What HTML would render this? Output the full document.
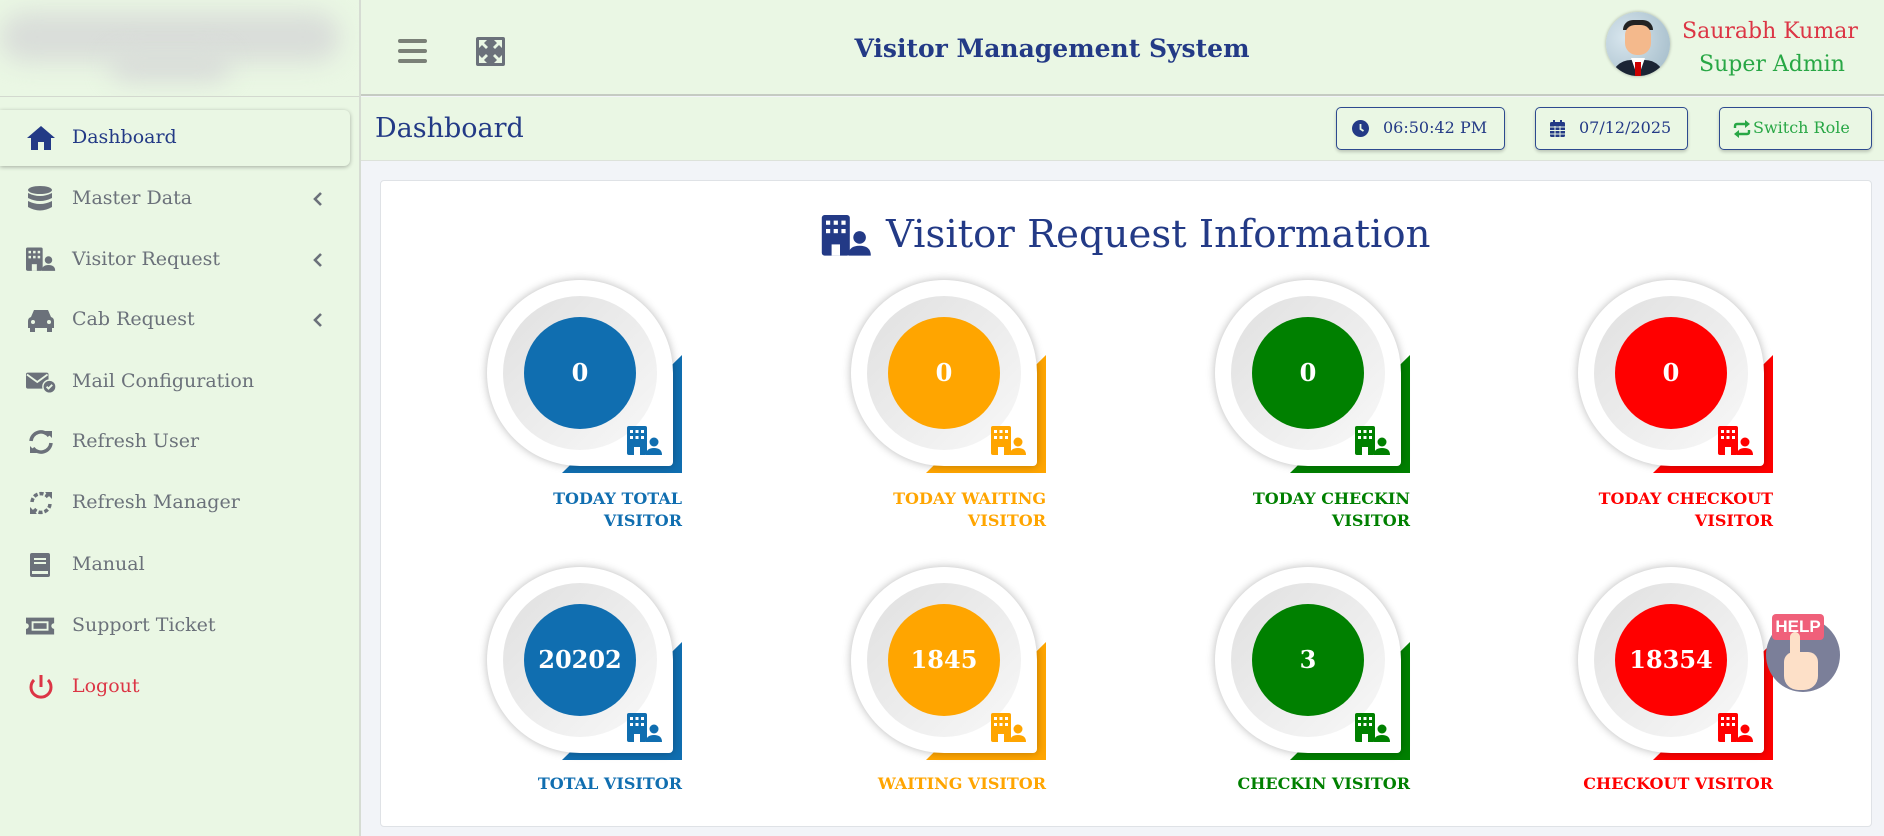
<!DOCTYPE html>
<html><head><meta charset="utf-8"><style>
*{margin:0;padding:0;box-sizing:border-box}
body{width:1884px;height:836px;overflow:hidden;background:#f2f4f8;font-family:"DejaVu Serif",serif;position:relative}
.side{position:absolute;left:0;top:0;width:361px;height:836px;background:#eaf7e4;border-right:2px solid #d6dcd3}
.logo{position:absolute;left:0;top:0;width:359px;height:97px;border-bottom:1px solid #d3d9cf;overflow:hidden}
.blur{position:absolute;border-radius:40px;background:#d9ddd9;filter:blur(12px)}
.item{position:absolute;left:0;width:350px;height:56px;color:#6b717a;font-size:19px}
.item .ic{position:absolute;left:26px;top:15px;width:30px;height:26px}
.item .tx{position:absolute;left:72px;top:16px}
.item .chev{position:absolute;left:313px;top:20px;width:10px;height:16px}
.active{background:#eaf7e4;border-radius:0 6px 6px 0;box-shadow:0 1px 4px rgba(0,0,0,.3);color:#233a86}
.hdr{position:absolute;left:361px;top:0;right:0;height:96px;background:#eaf7e4;border-bottom:2px solid #c5cbc2}
.sub{position:absolute;left:361px;top:97px;right:0;height:64px;background:#eaf7e4;border-bottom:1px solid #dde2da}
.btn{position:absolute;top:107px;height:43px;border:1.5px solid #2d4a8f;border-radius:5px;background:#eaf7e4;box-shadow:0 2px 3px rgba(0,0,0,.2);font-size:16px;color:#233a86;line-height:40px}
.card{position:absolute;left:380px;top:180px;width:1492px;height:647px;background:#fff;border:1px solid #dfe2e6;border-radius:4px}
.cell{position:absolute;width:0;height:0}
.clr{position:absolute;left:-96px;top:-96px;width:200px;height:200px;clip-path:polygon(198px 78px,198px 196px,78px 196px)}
.wh{position:absolute;left:-93px;top:-93px;width:186px;height:186px;background:#fff;border-radius:50% 50% 4px 50%;box-shadow:0 0 9px rgba(0,0,0,.28)}
.ring{position:absolute;left:-77px;top:-77px;width:154px;height:154px;border-radius:50%;background:linear-gradient(135deg,#e0e0e0,#f8f8f8)}
.num{position:absolute;left:-56px;top:-56px;width:112px;height:112px;border-radius:50%;color:#fff;font-weight:bold;font-size:24px;text-align:center;line-height:112px}
.bi{position:absolute;left:47px;top:53px;width:36px;height:30px}
.lab{position:absolute;right:-102px;width:240px;text-align:right;font-weight:bold;font-size:16px;line-height:22px}
</style></head><body>
<div class="side">
 <div class="logo">
  <div class="blur" style="left:0;top:12px;width:340px;height:50px"></div>
  <div class="blur" style="left:110px;top:50px;width:120px;height:32px"></div>
 </div>
 <div class="item active" style="top:110px"><svg class="ic" viewBox="0 0 30 26"><path d="M15 1 L29 13 H25 V25 H18 V17 H12 V25 H5 V13 H1Z" fill="#233a86"/></svg><span class="tx">Dashboard</span></div>
 <div class="item" style="top:171px"><svg class="ic" viewBox="0 0 30 26"><ellipse cx="14" cy="4" rx="12" ry="4" fill="#6b717a"/><path d="M2 7 Q14 13 26 7 V12 Q14 18 2 12Z M2 15 Q14 21 26 15 V21 Q14 28 2 21Z" fill="#6b717a"/></svg><span class="tx">Master Data</span><svg class="chev" viewBox="0 0 10 16"><path d="M8 2 L2 8 L8 14" stroke="#6b717a" stroke-width="2.6" fill="none"/></svg></div>
 <div class="item" style="top:232px"><svg class="ic" viewBox="0 0 36 30"><rect x="0" y="0" width="20" height="28" rx="2" fill="#6b717a"/><g fill="#eaf7e4"><rect x="3" y="4" width="3" height="3"/><rect x="8.5" y="4" width="3" height="3"/><rect x="14" y="4" width="3" height="3"/><rect x="3" y="10" width="3" height="3"/><rect x="8.5" y="10" width="3" height="3"/><rect x="14" y="10" width="3" height="3"/><rect x="7" y="20" width="6" height="8"/></g><circle cx="27" cy="15" r="4.5" fill="#6b717a"/><path d="M19 28 Q19 21 27 21 Q35 21 35 28Z" fill="#6b717a"/></svg><span class="tx">Visitor Request</span><svg class="chev" viewBox="0 0 10 16"><path d="M8 2 L2 8 L8 14" stroke="#6b717a" stroke-width="2.6" fill="none"/></svg></div>
 <div class="item" style="top:292px"><svg class="ic" viewBox="0 0 30 26"><path d="M5 10 L8 3 H22 L25 10 Q28 11 28 14 V21 H2 V14 Q2 11 5 10Z" fill="#6b717a"/><rect x="4" y="20" width="5" height="5" fill="#6b717a"/><rect x="21" y="20" width="5" height="5" fill="#6b717a"/><circle cx="7" cy="15" r="2" fill="#eaf7e4"/><circle cx="23" cy="15" r="2" fill="#eaf7e4"/></svg><span class="tx">Cab Request</span><svg class="chev" viewBox="0 0 10 16"><path d="M8 2 L2 8 L8 14" stroke="#6b717a" stroke-width="2.6" fill="none"/></svg></div>
 <div class="item" style="top:354px"><svg class="ic" viewBox="0 0 32 26"><rect x="0" y="3" width="24" height="17" rx="2" fill="#6b717a"/><path d="M1 5 L12 13 L23 5" stroke="#eaf7e4" stroke-width="2" fill="none"/><circle cx="25" cy="18" r="7" fill="#6b717a" stroke="#eaf7e4" stroke-width="1.5"/><path d="M22 18 l2 2 l4 -4" stroke="#eaf7e4" stroke-width="2" fill="none"/></svg><span class="tx">Mail Configuration</span></div>
 <div class="item" style="top:414px"><svg class="ic" viewBox="0 0 30 26"><path d="M5 12 A10 10 0 0 1 23 7 M25 14 A10 10 0 0 1 7 19" stroke="#6b717a" stroke-width="3.5" fill="none"/><path d="M19 2 L26 2 L26 9Z M11 24 L4 24 L4 17Z" fill="#6b717a"/></svg><span class="tx">Refresh User</span></div>
 <div class="item" style="top:475px"><svg class="ic" viewBox="0 0 30 26"><path d="M6 12 A9 9 0 0 1 22 7 M24 14 A9 9 0 0 1 8 19" stroke="#6b717a" stroke-width="3.5" fill="none" stroke-dasharray="4 2"/><path d="M19 2 L26 2 L26 9Z M11 24 L4 24 L4 17Z" fill="#6b717a"/></svg><span class="tx">Refresh Manager</span></div>
 <div class="item" style="top:537px"><svg class="ic" viewBox="0 0 30 26"><rect x="4" y="1" width="20" height="24" rx="2" fill="#6b717a"/><rect x="8" y="6" width="12" height="2" fill="#eaf7e4"/><rect x="8" y="10" width="12" height="2" fill="#eaf7e4"/><rect x="6" y="19" width="16" height="3" fill="#eaf7e4"/></svg><span class="tx">Manual</span></div>
 <div class="item" style="top:598px"><svg class="ic" viewBox="0 0 32 26"><path d="M0 4 H30 V10 A3 3 0 0 0 30 16 V22 H0 V16 A3 3 0 0 0 0 10Z" fill="#6b717a"/><rect x="6" y="8" width="18" height="10" fill="#eaf7e4"/><rect x="8" y="10" width="14" height="6" fill="#6b717a"/></svg><span class="tx">Support Ticket</span></div>
 <div class="item" style="top:659px;color:#dc3545"><svg class="ic" viewBox="0 0 30 26"><path d="M8 6 A10 10 0 1 0 22 6" stroke="#dc3545" stroke-width="3" fill="none"/><path d="M15 1 V13" stroke="#dc3545" stroke-width="3"/></svg><span class="tx">Logout</span></div>
</div>

<div class="hdr">
 <svg style="position:absolute;left:37px;top:38px" width="29" height="27" viewBox="0 0 29 27"><g stroke="#7a8077" stroke-width="4" stroke-linecap="round"><path d="M2 3H27M2 13H27M2 23H27"/></g></svg>
 <svg style="position:absolute;left:115px;top:37px" width="29" height="29" viewBox="0 0 29 29"><rect width="29" height="29" rx="2" fill="#6b717a"/><g fill="#eaf7e4"><path d="M3 3 h8 l-3 3 l4 4 l-2 2 l-4 -4 l-3 3z"/><path d="M26 3 v8 l-3 -3 l-4 4 l-2 -2 l4 -4 l-3 -3z"/><path d="M3 26 v-8 l3 3 l4 -4 l2 2 l-4 4 l3 3z"/><path d="M26 26 h-8 l3 -3 l-4 -4 l2 -2 l4 4 l3 -3z"/></g></svg>
 <div style="position:absolute;left:0;width:1382px;top:34px;text-align:center;font-size:25px;font-weight:bold;color:#233a86">Visitor Management System</div>
 <div style="position:absolute;left:1245px;top:12px;width:64px;height:64px;border-radius:50%;background:radial-gradient(circle at 30% 40%,#d8e6ee,#9fb8c6);overflow:hidden;box-shadow:0 0 3px rgba(0,0,0,.3)">
  <div style="position:absolute;left:17px;top:8px;width:30px;height:10px;border-radius:12px 12px 0 0;background:#222"></div>
  <div style="position:absolute;left:19px;top:13px;width:26px;height:30px;border-radius:10px 10px 12px 12px;background:#f4b98c"></div>
  <div style="position:absolute;left:5px;top:48px;width:54px;height:30px;border-radius:20px 20px 0 0;background:#1b2434"></div>
  <div style="position:absolute;left:25px;top:46px;width:14px;height:20px;background:#fff;clip-path:polygon(0 0,100% 0,50% 100%)"></div>
  <div style="position:absolute;left:29px;top:50px;width:6px;height:14px;background:#c00"></div>
 </div>
 <div style="position:absolute;left:1321px;top:19px;font-size:22px;color:#dc3545;white-space:nowrap">Saurabh Kumar</div>
 <div style="position:absolute;left:1338px;top:52px;font-size:22px;color:#28a745;white-space:nowrap">Super Admin</div>
</div>
<div class="sub">
 <div style="position:absolute;left:14px;top:16px;font-size:27px;color:#233a86">Dashboard</div>
</div>
<div class="btn" style="left:1336px;width:169px"><svg style="position:absolute;left:15px;top:12px" width="17" height="17" viewBox="0 0 17 17"><circle cx="8.5" cy="8.5" r="8.5" fill="#233a86"/><path d="M8.5 4V9L11.5 11" stroke="#eaf7e4" stroke-width="1.8" fill="none"/></svg><span style="position:absolute;left:46px">06:50:42 PM</span></div>
<div class="btn" style="left:1535px;width:153px"><svg style="position:absolute;left:14px;top:12px" width="15" height="17" viewBox="0 0 15 17"><rect y="2" width="15" height="15" rx="1.5" fill="#233a86"/><rect x="3" y="0" width="2" height="4" fill="#233a86"/><rect x="10" y="0" width="2" height="4" fill="#233a86"/><g stroke="#eaf7e4" stroke-width="1"><path d="M0 7H15M0 10.5H15M0 14H15M5 6V17M10 6V17"/></g></svg><span style="position:absolute;left:43px">07/12/2025</span></div>
<div class="btn" style="left:1719px;width:153px;color:#28a745"><svg style="position:absolute;left:13px;top:12px" width="18" height="18" viewBox="0 0 18 18"><path d="M2 8 V6 Q2 4 4 4 H13 M16 10 V12 Q16 14 14 14 H5" stroke="#28a745" stroke-width="2.4" fill="none"/><path d="M12 0 L17 4 L12 8Z M6 10 L1 14 L6 18Z" fill="#28a745"/></svg><span style="position:absolute;left:33px">Switch Role</span></div>

<div class="card"></div>
<svg style="position:absolute;left:821px;top:215px" width="52" height="42" viewBox="0 0 36 30"><rect x="0" y="0" width="20" height="29" rx="2" fill="#233a86"/><g fill="#fff"><rect x="3" y="4" width="3" height="3"/><rect x="8.5" y="4" width="3" height="3"/><rect x="14" y="4" width="3" height="3"/><rect x="3" y="10" width="3" height="3"/><rect x="8.5" y="10" width="3" height="3"/><rect x="14" y="10" width="3" height="3"/><rect x="7" y="21" width="6" height="8"/></g><circle cx="27" cy="16" r="4.5" fill="#233a86"/><path d="M19 29 Q19 22 27 22 Q35 22 35 29Z" fill="#233a86"/></svg>
<div style="position:absolute;left:886px;top:212px;font-size:38.6px;color:#233a86;white-space:nowrap">Visitor Request Information</div>

<svg width="0" height="0" style="position:absolute"><defs><g id="bi"><rect x="0" y="0" width="20" height="29" rx="2"/><g fill="#fff"><rect x="3" y="4" width="3" height="3"/><rect x="8.5" y="4" width="3" height="3"/><rect x="14" y="4" width="3" height="3"/><rect x="3" y="10" width="3" height="3"/><rect x="8.5" y="10" width="3" height="3"/><rect x="14" y="10" width="3" height="3"/><rect x="7" y="21" width="6" height="8"/></g><circle cx="27" cy="16" r="4.5"/><path d="M19 29 Q19 22 27 22 Q35 22 35 29Z"/></g></defs></svg>

<div class="cell" style="left:580px;top:373px"><div class="clr" style="background:#106eb0"></div><div class="wh"></div><div class="ring"></div><div class="num" style="background:#106eb0">0</div><svg class="bi" viewBox="0 0 36 30" fill="#106eb0"><use href="#bi"/></svg><div class="lab" style="top:115px;color:#106eb0">TODAY TOTAL<br>VISITOR</div></div>
<div class="cell" style="left:944px;top:373px"><div class="clr" style="background:#ffa500"></div><div class="wh"></div><div class="ring"></div><div class="num" style="background:#ffa500">0</div><svg class="bi" viewBox="0 0 36 30" fill="#ffa500"><use href="#bi"/></svg><div class="lab" style="top:115px;color:#ffa500">TODAY WAITING<br>VISITOR</div></div>
<div class="cell" style="left:1308px;top:373px"><div class="clr" style="background:#008000"></div><div class="wh"></div><div class="ring"></div><div class="num" style="background:#008000">0</div><svg class="bi" viewBox="0 0 36 30" fill="#008000"><use href="#bi"/></svg><div class="lab" style="top:115px;color:#008000">TODAY CHECKIN<br>VISITOR</div></div>
<div class="cell" style="left:1671px;top:373px"><div class="clr" style="background:#ff0000"></div><div class="wh"></div><div class="ring"></div><div class="num" style="background:#ff0000">0</div><svg class="bi" viewBox="0 0 36 30" fill="#ff0000"><use href="#bi"/></svg><div class="lab" style="top:115px;color:#ff0000">TODAY CHECKOUT<br>VISITOR</div></div>

<div class="cell" style="left:580px;top:660px"><div class="clr" style="background:#106eb0"></div><div class="wh"></div><div class="ring"></div><div class="num" style="background:#106eb0">20202</div><svg class="bi" viewBox="0 0 36 30" fill="#106eb0"><use href="#bi"/></svg><div class="lab" style="top:113px;color:#106eb0">TOTAL VISITOR</div></div>
<div class="cell" style="left:944px;top:660px"><div class="clr" style="background:#ffa500"></div><div class="wh"></div><div class="ring"></div><div class="num" style="background:#ffa500">1845</div><svg class="bi" viewBox="0 0 36 30" fill="#ffa500"><use href="#bi"/></svg><div class="lab" style="top:113px;color:#ffa500">WAITING VISITOR</div></div>
<div class="cell" style="left:1308px;top:660px"><div class="clr" style="background:#008000"></div><div class="wh"></div><div class="ring"></div><div class="num" style="background:#008000">3</div><svg class="bi" viewBox="0 0 36 30" fill="#008000"><use href="#bi"/></svg><div class="lab" style="top:113px;color:#008000">CHECKIN VISITOR</div></div>
<div class="cell" style="left:1671px;top:660px"><div class="clr" style="background:#ff0000"></div><div class="wh"></div><div class="ring"></div><div class="num" style="background:#ff0000">18354</div><svg class="bi" viewBox="0 0 36 30" fill="#ff0000"><use href="#bi"/></svg><div class="lab" style="top:113px;color:#ff0000">CHECKOUT VISITOR</div></div>

<div style="position:absolute;left:1766px;top:618px;width:74px;height:74px;border-radius:50%;background:#7b7f99"></div>
<div style="position:absolute;left:1772px;top:614px;width:52px;height:26px;background:#f0607a;border-radius:4px;color:#fff;font-family:'Liberation Sans',sans-serif;font-weight:bold;font-size:17px;text-align:center;line-height:26px">HELP</div>
<div style="position:absolute;left:1790px;top:632px;width:10px;height:30px;border-radius:5px;background:#fde0c8"></div>
<div style="position:absolute;left:1784px;top:652px;width:34px;height:38px;border-radius:10px 10px 14px 14px;background:#fde0c8"></div>
</body></html>
